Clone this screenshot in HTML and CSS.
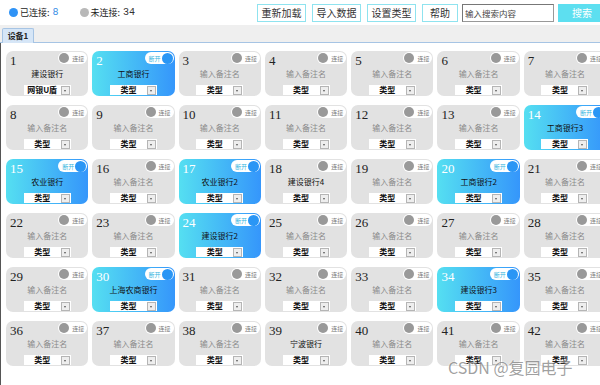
FILE: index.html
```html
<!DOCTYPE html>
<html>
<head>
	<meta charset="utf-8">
	<title>设备</title>
	<link rel="stylesheet" href="styles.css">
</head>
<body>

	<div id="pagina">
		<div class="cabecera">
			<div class="estado">
				<span class="punto punto-on"></span>
				<span class="etiqueta">已连接:</span>
				<span class="cuenta cuenta-on">8</span>
				<span class="punto punto-off"></span>
				<span class="etiqueta">未连接:</span>
				<span class="cuenta">34</span>
			</div>
			<div class="acciones">
				<button class="boton">重新加载</button>
				<button class="boton">导入数据</button>
				<button class="boton">设置类型</button>
				<button class="boton boton-corto">帮助</button>
				<input class="buscar" type="text" placeholder="输入搜索内容">
				<button class="boton-buscar">搜索</button>
			</div>
		</div>

		<div class="pestanas">
			<div class="pestana">设备1</div>
		</div>

		<div id="contenedorTarjetas"></div>
	</div>

	<div class="marca">CSDN @复园电子</div>

<script type="text/javascript">
	let nombres = {
		1: '建设银行', 2: '工商银行', 14: '工商银行3', 15: '农业银行', 17: '农业银行2',
		18: '建设银行4', 20: '工商银行2', 24: '建设银行2', 30: '上海农商银行',
		34: '建设银行3', 39: '宁波银行'
	};
	let conectados = [2, 14, 15, 17, 20, 24, 30, 34];

	let contenedorTarjetas = document.getElementById('contenedorTarjetas');
	crearTarjetas(contenedorTarjetas, 42);
	function crearTarjetas(contenedor, cantidad){
		for (let i = 1; i <= cantidad; i++){
			let activa = conectados.indexOf(i) != -1
			let tarjeta = document.createElement('div')
			tarjeta.className = activa ? 'tarjeta activa' : 'tarjeta'

			let num = document.createElement('div')
			num.className = 'num'
			num.textContent = i
			tarjeta.appendChild(num)

			let interruptor = document.createElement('div')
			interruptor.className = 'interruptor'
			interruptor.innerHTML = activa
				? '<span class="txt">断开</span><span class="bola"></span>'
				: '<span class="bola"></span><span class="txt">连接</span>'
			tarjeta.appendChild(interruptor)

			let nombre = document.createElement('div')
			nombre.className = nombres[i] ? 'nombre' : 'nombre vacio'
			nombre.textContent = nombres[i] || '输入备注名'
			tarjeta.appendChild(nombre)

			let sel = document.createElement('div')
			sel.className = 'sel'
			sel.innerHTML = '<span class="sel-txt">' + (i == 1 ? '网银U盾' : '类型') + '</span><span class="flecha"></span>'
			tarjeta.appendChild(sel)

			contenedor.appendChild(tarjeta)
		}
	}
</script>

</body>
</html>
```

FILE: styles.css
```css
*{box-sizing: border-box;}
html, body{margin: 0; overflow: hidden;}
body{
	width: 600px;
	height: 385px;
	background: #fff;
	font-family: "Noto Sans CJK SC", "DejaVu Sans", sans-serif;
	color: #222;
	position: relative;
}
#pagina{width: 606px;}

/* cabecera */
.cabecera{
	display: flex;
	align-items: center;
	height: 25px;
	padding-left: 9px;
}
.estado{display: flex; align-items: center; font-size: 9px;}
.punto{width: 9px; height: 9px; border-radius: 50%; display: inline-block; margin-right: 2px;}
.punto-on{background: #2f93f6;}
.punto-off{background: #b8b8b8; margin-left: 21px;}
.etiqueta{color: #222;}
.cuenta{font-family: "Liberation Mono", monospace; font-size: 10px; margin-left: 3px; color: #333;}
.cuenta-on{color: #3a8ee6;}

.acciones{display: flex; align-items: center; margin-left: auto;}
.boton{
	height: 18px;
	width: 49px;
	padding: 0;
	margin-right: 6px;
	background: #fff;
	border: 1px solid #8fe3ef;
	font-family: inherit;
	font-size: 10px;
	color: #333;
}
.boton-corto{width: 36px; margin-right: 4px;}
.buscar{
	width: 92px;
	height: 18px;
	border: 1px solid #999;
	border-top-color: #777;
	border-left-color: #777;
	padding: 0 2px;
	font-family: inherit;
	font-size: 8.5px;
	margin-right: 4px;
}
.buscar::placeholder{color: #444;}
.boton-buscar{
	width: 48px;
	height: 18px;
	border: none;
	background: #5ddff0;
	color: #fff;
	font-family: inherit;
	font-size: 10px;
}

/* pestañas */
.pestanas{
	height: 18px;
	background: #efefef;
	border-bottom: 1px solid #a6c4e4;
	padding: 3px 0 0 2px;
}
.pestana{
	width: 32px;
	height: 15px;
	background: #d6e6f7;
	border: 1px solid #a6c4e4;
	border-bottom: none;
	border-radius: 2px 2px 0 0;
	font-size: 8px;
	font-weight: bold;
	line-height: 13px;
	text-align: center;
}

/* tarjetas */
#contenedorTarjetas{
	display: grid;
	grid-template-columns: repeat(7, 82.3px);
	grid-auto-rows: 45px;
	column-gap: 4px;
	row-gap: 9px;
	padding: 8px 0 0 5px;
	border-left: 1px solid #555;
	height: 360px;
}
.tarjeta{
	position: relative;
	background: #e2e2e2;
	border-radius: 7px;
	display: flex;
	flex-direction: column;
	align-items: center;
}
.tarjeta.activa{background: linear-gradient(to right, #55dff1, #3596fb);}
.num{
	align-self: flex-start;
	height: 17px;
	line-height: 20px;
	padding-left: 4px;
	font-family: "Liberation Serif", serif;
	font-size: 13px;
	color: #222;
}
.activa .num{color: #fff;}
.nombre{
	height: 12px;
	line-height: 12px;
	font-size: 8px;
	color: #111;
}
.nombre.vacio{color: #8a8a8a;}

.interruptor{
	position: absolute;
	top: 1px;
	right: 1px;
	width: 29px;
	height: 12px;
	background: #fff;
	border-radius: 6px;
	display: flex;
	align-items: center;
	justify-content: space-between;
	padding: 0 1px;
}
.interruptor .bola{width: 10px; height: 10px; border-radius: 50%; background: #999;}
.interruptor .txt{font-size: 6px; color: #777; padding: 0 2px 0 1px;}
.activa .interruptor .bola{background: #2a96f5; width: 11px; height: 11px;}
.activa .interruptor .txt{color: #38b6e0; padding: 0 1px 0 3px;}

.sel{
	margin-top: 5px;
	width: 47px;
	height: 10px;
	background: #fff;
	display: flex;
	align-items: center;
}
.sel-txt{
	flex: 1;
	text-align: center;
	font-size: 8px;
	font-weight: bold;
	line-height: 10px;
	color: #111;
}
.flecha{
	width: 9px;
	height: 9px;
	margin-right: 1px;
	background: #eee;
	border: 1px solid #b5b5b5;
	position: relative;
}
.flecha::after{
	content: "";
	position: absolute;
	left: 2px;
	top: 3px;
	border-left: 1.5px solid transparent;
	border-right: 1.5px solid transparent;
	border-top: 2px solid #555;
}

.marca{
	position: absolute;
	left: 448px;
	top: 355px;
	font-size: 16px;
	color: rgba(95, 95, 95, .6);
	text-shadow: 0 0 2px #fff;
	white-space: nowrap;
}
```
